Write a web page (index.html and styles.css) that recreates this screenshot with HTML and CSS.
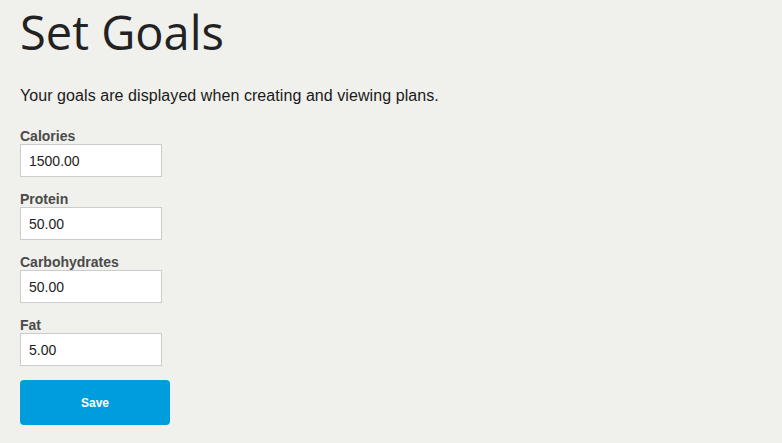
FILE: index.html
```html
<!DOCTYPE html>
<html>
<head>
<meta charset="utf-8">
<link rel="stylesheet" href="styles.css">
</head>
<body>
<main class="page">
  <h1 class="title">Set Goals</h1>
  <p class="intro">Your goals are displayed when creating and viewing plans.</p>
  <form class="goals">
    <div class="field">
      <label class="label">Calories</label>
      <input class="input" type="text" value="1500.00">
    </div>
    <div class="field">
      <label class="label">Protein</label>
      <input class="input" type="text" value="50.00">
    </div>
    <div class="field">
      <label class="label">Carbohydrates</label>
      <input class="input" type="text" value="50.00">
    </div>
    <div class="field">
      <label class="label">Fat</label>
      <input class="input" type="text" value="5.00">
    </div>
    <button class="save" type="button">Save</button>
  </form>
</main>
</body>
</html>
```

FILE: styles.css
```css
html, body {
  margin: 0;
  padding: 0;
  background: #f0f0ec;
}
.page {
  padding: 0 20px;
  font-family: "Liberation Sans", Arial, sans-serif;
  color: #222;
}
.title {
  margin: 0;
  padding-top: 4px;
  font-family: "Open Sans", sans-serif;
  font-weight: 400;
  font-size: 47px;
  line-height: 56px;
  color: #222;
  letter-spacing: 0;
}
.intro {
  margin: 26px 0 0;
  font-size: 16px;
  line-height: 20px;
  color: #1a1a1a;
  letter-spacing: 0.07px;
}
.goals {
  display: flex;
  flex-direction: column;
  align-items: flex-start;
  margin-top: 22px;
}
.field {
  display: flex;
  flex-direction: column;
  align-items: flex-start;
  margin-bottom: 14px;
}
.label {
  font-size: 14px;
  font-weight: bold;
  line-height: 16px;
  color: #4a4a4a;
}
.input {
  box-sizing: border-box;
  width: 142px;
  height: 33px;
  margin: 0;
  padding: 0 8px;
  border: 1px solid #cccccc;
  background: #fff;
  font-family: "Liberation Sans", Arial, sans-serif;
  font-size: 14px;
  color: #222;
  outline: none;
}
.save {
  width: 150px;
  height: 45px;
  margin-top: 0;
  border: none;
  border-radius: 4px;
  background: #009ddc;
  color: #fff;
  font-family: "Liberation Sans", Arial, sans-serif;
  font-size: 12px;
  font-weight: bold;
}
```
